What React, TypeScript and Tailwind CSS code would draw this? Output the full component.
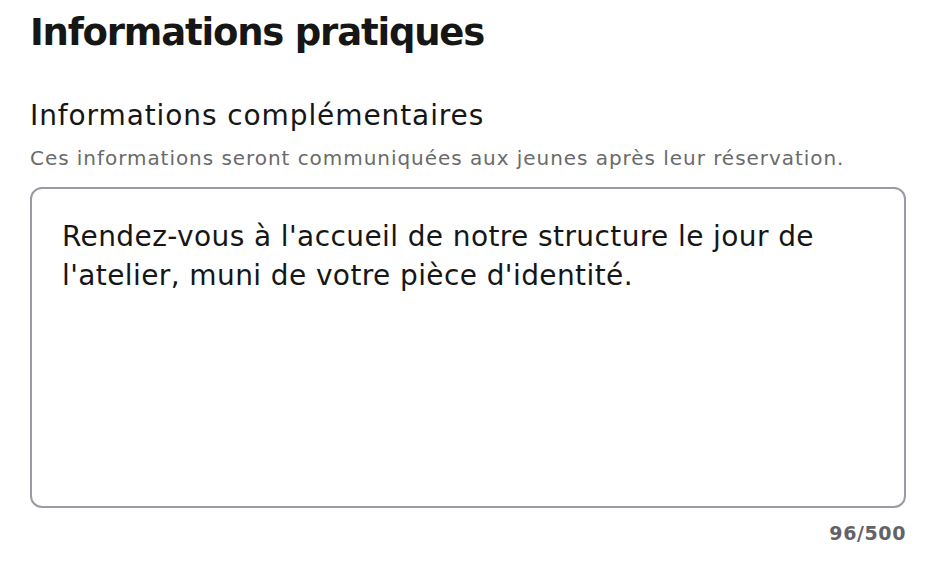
const font = { fontFamily: '"DejaVu Sans", "Noto Sans", sans-serif' };

export default function App() {
  const value =
    "Rendez-vous à l'accueil de notre structure le jour de l'atelier, muni de votre pièce d'identité.";

  return (
    <div className="min-h-screen bg-white px-[30px] pt-[9px]" style={font}>
      <h1 className="text-[37px] leading-[48px] font-bold tracking-[-1.2px] text-[#161616]">
        Informations pratiques
      </h1>

      <div className="mt-[42px] flex flex-col">
        <label
          htmlFor="extra-info"
          className="text-[28px] leading-[34px] tracking-[0.9px] text-[#161616]"
        >
          Informations complémentaires
        </label>
        <p className="mt-[13px] text-[20px] leading-[24px] tracking-[0.95px] text-[#6a6a6a]">
          Ces informations seront communiquées aux jeunes après leur réservation.
        </p>

        <textarea
          id="extra-info"
          defaultValue={value}
          className="mt-[17px] w-[876px] h-[321px] resize-none rounded-[12px] border-2 border-[#9a9ba3] px-[30px] pt-[28px] text-[28px] leading-[39px] tracking-[0.4px] text-[#161616] outline-none"
          style={font}
        />

        <div className="w-[876px] mt-[13px] text-right text-[19px] leading-[24px] font-semibold tracking-[0.6px] text-[#626268]">
          {value.length}/500
        </div>
      </div>
    </div>
  );
}
